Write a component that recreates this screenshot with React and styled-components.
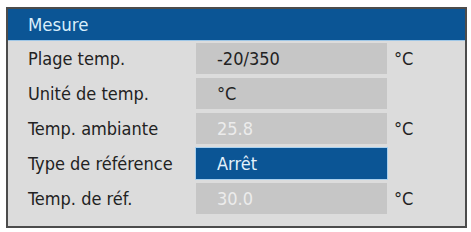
import React from 'react'
import styled, { createGlobalStyle } from 'styled-components'

const Global = createGlobalStyle`
  body {
    margin: 0;
    background: #fff;
    font-family: "Liberation Sans Narrow", "DejaVu Sans Condensed", "Liberation Sans", sans-serif;
  }
`

const Frame = styled.div`
  margin: 7px 0 0 6px;
  width: 461px;
  height: 221px;
  box-sizing: border-box;
  border: 2px solid #4c4c4c;
  background: #dcdcdc;
`

const Header = styled.div`
  height: 31px;
  display: flex;
  align-items: center;
  padding-left: 20px;
  background: #0b5595;
  border-bottom: 1px solid #9ec6e6;
  color: #d9eefb;
  font-size: 18.5px;
`

const Rows = styled.div`
  display: grid;
  grid-template-columns: 168px 191px 1fr;
  grid-auto-rows: 31px;
  row-gap: 4px;
  padding: 2px 0 0 20px;
  align-items: center;
`

const Label = styled.div`
  color: #222;
  font-size: 18px;
`

const Value = styled.div`
  height: 100%;
  display: flex;
  align-items: center;
  box-sizing: border-box;
  padding-left: 21px;
  font-size: 18px;
  background: ${p => (p.$selected ? '#0b5595' : '#c6c6c6')};
  color: ${p => (p.$selected ? '#e3f2fc' : p.$disabled ? '#ececec' : '#222')};
  box-shadow: ${p => (p.$selected ? '0 0 0 1px #a9d0ee' : 'none')};
`

const Unit = styled.div`
  padding-left: 7px;
  color: #222;
  font-size: 18px;
`

const rows = [
  { label: 'Plage temp.', value: '-20/350', unit: '°C' },
  { label: 'Unité de temp.', value: '°C', unit: '' },
  { label: 'Temp. ambiante', value: '25.8', unit: '°C', disabled: true },
  { label: 'Type de référence', value: 'Arrêt', unit: '', selected: true },
  { label: 'Temp. de réf.', value: '30.0', unit: '°C', disabled: true },
]

export default function App() {
  return (
    <>
      <Global />
      <Frame>
        <Header>Mesure</Header>
        <Rows>
          {rows.map(r => (
            <React.Fragment key={r.label}>
              <Label>{r.label}</Label>
              <Value $selected={r.selected} $disabled={r.disabled}>{r.value}</Value>
              <Unit>{r.unit}</Unit>
            </React.Fragment>
          ))}
        </Rows>
      </Frame>
    </>
  )
}
